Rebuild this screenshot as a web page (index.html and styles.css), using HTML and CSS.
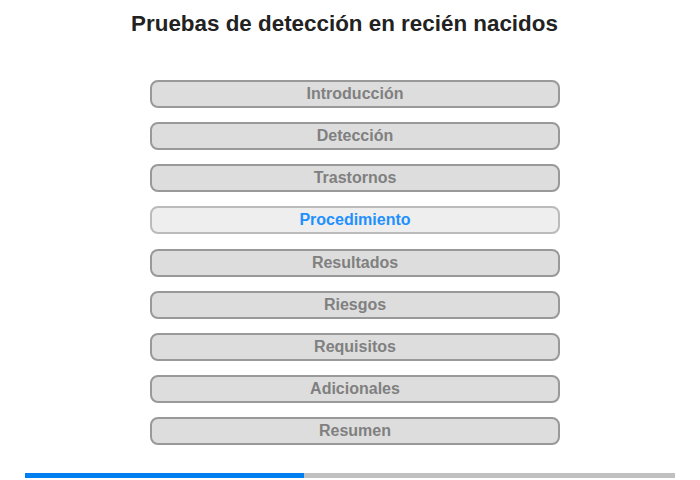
FILE: index.html
```html
<!DOCTYPE html>
<html lang="es">
<head>
    <meta charset="UTF-8">
    <title>Pruebas de detección en recién nacidos</title>
    <link rel="stylesheet" href="styles.css">
</head>
<body>
<div class="page">
    <h1 class="title">Pruebas de detección en recién nacidos</h1>
    <ul class="menu">
        <li><a href="#">Introducción</a></li>
        <li><a href="#">Detección</a></li>
        <li><a href="#">Trastornos</a></li>
        <li class="current"><a href="#">Procedimiento</a></li>
        <li><a href="#">Resultados</a></li>
        <li><a href="#">Riesgos</a></li>
        <li><a href="#">Requisitos</a></li>
        <li><a href="#">Adicionales</a></li>
        <li><a href="#">Resumen</a></li>
    </ul>
    <div class="progress"><div class="bar" style="width: 42.9%"></div></div>
</div>
</body>
</html>
```

FILE: styles.css
```css
* {
    margin: 0;
    padding: 0;
    list-style: none;
    box-sizing: border-box;
}

body {
    font-family: "Liberation Sans", Arial, sans-serif;
    background: #fff;
}

.page {
    width: 700px;
    height: 480px;
    padding: 11px 25px 0;
}

.title {
    font-size: 22.4px;
    font-weight: bold;
    color: #222;
    text-align: center;
    line-height: 26px;
    padding-right: 11px;
}

.menu {
    width: 410px;
    margin: 43px 0 0 125px;
    display: flex;
    flex-direction: column;
    gap: 14.15px;
}

.menu li a {
    display: block;
    height: 28px;
    line-height: 24px;
    border: 2px solid #999;
    border-radius: 8px;
    background: #ddd;
    color: #808080;
    font-size: 16px;
    font-weight: bold;
    text-align: center;
    text-decoration: none;
}

.menu li.current a {
    background: #eee;
    border-color: #bbb;
    color: #1e90ff;
}

.progress {
    margin-top: 28px;
    height: 5px;
    background: #c0c0c0;
}

.progress .bar {
    height: 100%;
    background: #0080f0;
}
```
